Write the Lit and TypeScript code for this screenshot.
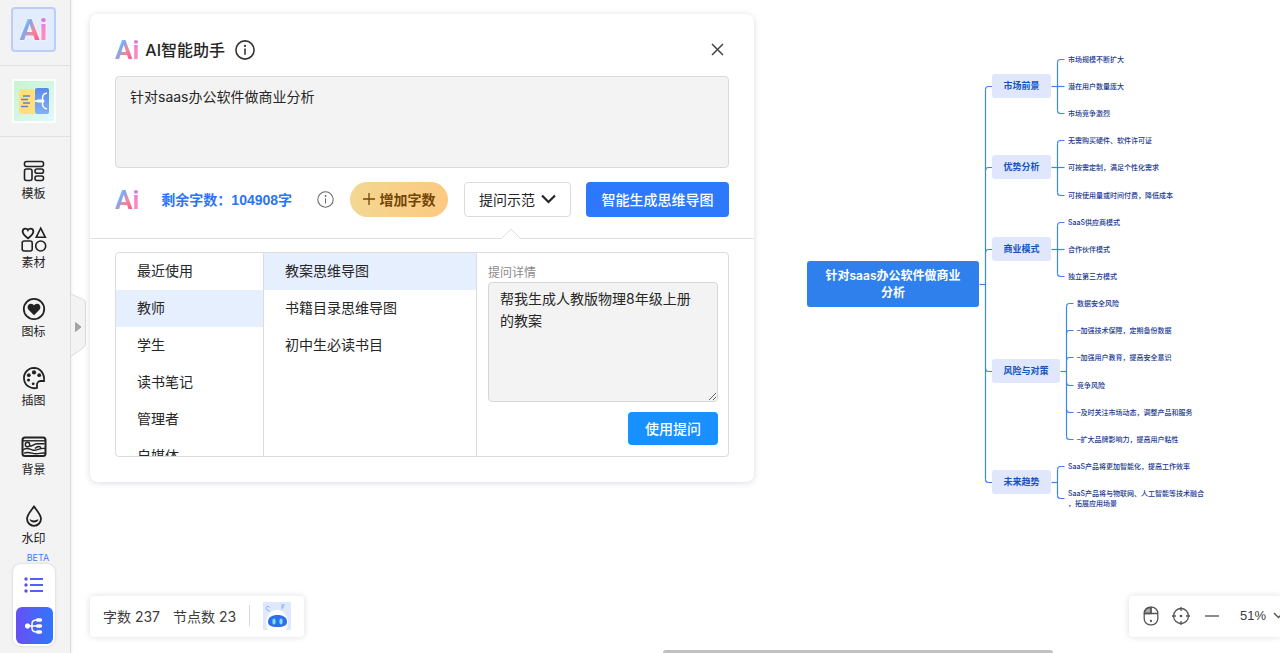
import { LitElement, html, svg, css } from "lit";
import { customElement, property, state } from "lit/decorators.js";
import { classMap } from "lit/directives/class-map.js";
import { styleMap } from "lit/directives/style-map.js";

const controls = css`
  * {
    box-sizing: border-box;
  }
  button {
    margin: 0;
    padding: 0;
    border: 0;
    background: none;
    color: inherit;
    font: inherit;
    cursor: pointer;
  }
  textarea {
    font: inherit;
    color: inherit;
    outline: none;
  }
  svg {
    display: block;
    flex: none;
  }
`;

@customElement("ai-mark")
export class AiMark extends LitElement {
  static styles = css`
    :host {
      display: flex;
      --mark-size: 26px;
    }
    .mark {
      font-family: Roboto, sans-serif;
      font-size: var(--mark-size);
      font-weight: 700;
      line-height: 30px;
      color: transparent;
      background-clip: text;
      -webkit-background-clip: text;
    }
    .a {
      background-image: linear-gradient(120deg, #8ff0f5 18%, #79a9f5 38%, #f08a9c 60%, #fb5f8d 85%);
    }
    .i {
      background-image: linear-gradient(180deg, #d478f0 15%, #f78acb 50%, #ff8fb6 85%);
    }
  `;
  render() {
    return html`<span class="mark a">A</span><span class="mark i">i</span>`;
  }
}

const icons: Record<string, unknown> = {
  template: svg`<rect x="1.500" y="1.500" width="19" height="5" rx="2"/><rect x="1.500" y="9" width="7.500" height="11.500" rx="2"/><rect x="12" y="9" width="8.500" height="4.200" rx="2"/><rect x="12" y="16" width="8.500" height="4.500" rx="2"/>`,
  material: svg`<path d="M5 9.2C2.4 7.3.4 5.7.4 3.3.4 1.7 1.5.7 2.8.7 3.8.7 4.6 1.2 5 2 5.500 1.200 6.300.7 7.200.7c1.400 0 2.500 1 2.500 2.600 0 2.400-2 4-4.700 5.900Z" transform="translate(-.8 -1.200) scale(1.150)"/><path d="M17.700-.8 22.300 8.300H13.200Z"/><rect x="-.8" y="12" width="10" height="10" rx="2"/><circle cx="17.700" cy="17" r="5"/>`,
  sticker: svg`<circle cx="11" cy="11" r="10.200" stroke-width="1.800"/><path fill="currentColor" stroke="none" d="M11 17.200 5.800 12.100C3.300 9.400 5 5.800 8 5.800c1.300 0 2.400.7 3 1.700.6-1 1.700-1.700 3-1.700 3 0 4.700 3.600 2.200 6.300Z"/>`,
  palette: svg`<path stroke-width="1.800" d="M11 .8A10.200 10.200 0 1 0 14 20.800V18A3.800 3.800 0 0 1 17.500 14H21C21.800 6.500 17 .8 11 .8Z"/><g fill="currentColor" stroke="none"><circle cx="5.800" cy="8.200" r="1.900"/><circle cx="11" cy="5.400" r="2.100"/><circle cx="16.200" cy="8.200" r="1.900"/><circle cx="5.500" cy="13" r="1.600"/><circle cx="10.200" cy="16.800" r="1.400"/></g>`,
  backdrop: svg`<rect x="-.5" y="1.500" width="23" height="18.500" rx="2.500" stroke-width="2"/><g stroke-width="1.400"><path d="M0 4.800h22"/><circle cx="4.500" cy="8.500" r="2.200"/><path d="M6.500 10.200c3 0 4.500-2.400 8-2.400h7M0 14c4-3.500 7-.5 10 .2 4 .8 7-2.700 12-1.700M12 12.500c3-2.500 5-2.500 6-.6M1 17.200c5-2.200 8 .6 12 .6 3.500 0 5-1.200 9-.8"/></g>`,
  watermark: svg`<path stroke-width="1.800" d="M11 1.500C8 5.700 4 9.800 4 13.800A7 7 0 0 0 18 13.800C18 9.800 14 5.700 11 1.500Z"/><path fill="currentColor" stroke="none" d="M6.500 14c2.500 1.800 5.500 1.800 9 .3-.5 2.200-2.200 3.200-4.500 3.200s-4-1.200-4.500-3.500Z"/>`,
};

@customElement("tool-rail")
export class ToolRail extends LitElement {
  static styles = [
    controls,
    css`
      :host {
        display: flex;
        flex-direction: column;
        align-items: stretch;
        width: 71px;
        flex: none;
        height: 100%;
        overflow: hidden;
        background: #f3f3f3;
        border-right: 1px solid #dcdcdc;
        box-shadow: 0 0 3px rgba(0, 0, 0, 0.12);
        color: #222;
      }
      .cell {
        display: flex;
        justify-content: center;
        flex: none;
        padding: 7px 3px 13px 0;
        border-bottom: 1px solid #e0e0e0;
      }
      .cell.second {
        padding: 12px 3px 13px 0;
      }
      .tile {
        display: flex;
        align-items: center;
        justify-content: center;
        width: 45px;
        height: 45px;
      }
      .tile.ai {
        background: #e3ecfd;
        border: 2px solid #bccdf8;
        border-radius: 4px;
      }
      .tile ai-mark {
        --mark-size: 30px;
        filter: drop-shadow(0 0 1px #fff);
      }
      .tools {
        display: flex;
        flex-direction: column;
        flex: none;
        padding: 23px 3px 0 0;
      }
      .tool {
        display: flex;
        flex-direction: column;
        align-items: center;
        height: 69px;
        gap: 3px;
        font-size: 12px;
        line-height: 18px;
      }
      .tool:last-child {
        height: 47px;
      }
      .tool svg {
        overflow: visible;
        fill: none;
        stroke: currentColor;
        stroke-width: 1.6;
      }
      .beta {
        padding-left: 6px;
        text-align: center;
        font-size: 9px;
        line-height: 12px;
        color: #3b7cf6;
      }
      .modes {
        display: flex;
        flex-direction: column;
        align-items: center;
        width: 42px;
        margin-left: 13px;
        padding: 2px;
        gap: 4px;
        background: #fff;
        border-radius: 8px;
        box-shadow: 0 0 3px rgba(0, 0, 0, 0.16);
      }
      .mode {
        display: flex;
        align-items: center;
        justify-content: center;
        width: 37px;
        height: 37px;
        border-radius: 6px;
      }
      .mode.on {
        background: linear-gradient(90deg, #6750f5, #3176fb);
      }
    `,
  ];

  private tools = [
    ["template", "模板"],
    ["material", "素材"],
    ["sticker", "图标"],
    ["palette", "插图"],
    ["backdrop", "背景"],
    ["watermark", "水印"],
  ];

  render() {
    return html`
      <div class="cell">
        <button class="tile ai" aria-label="AI"><ai-mark></ai-mark></button>
      </div>
      <div class="cell second">
        <button class="tile" aria-label="大纲与导图">
          <svg width="44" height="44" viewBox="0 0 44 44">
            <defs>
              <linearGradient id="mint" x2="1" y2="1"><stop stop-color="#c5f5d0" /><stop offset="1" stop-color="#e3f8fb" /></linearGradient>
              <linearGradient id="sky" x2="0" y2="1"><stop stop-color="#5b8bea" /><stop offset="1" stop-color="#80b1f8" /></linearGradient>
            </defs>
            <rect width="44" height="44" fill="#fbfffc" />
            <rect x="2" y="2" width="40" height="40" fill="url(#mint)" />
            <rect x="7" y="10" width="16" height="25" rx="2" fill="#ffe07a" />
            <rect x="23" y="9" width="14" height="26" rx="2" fill="url(#sky)" />
            <path d="M11 17h7M9 20.500h7M11 24h7M9 27.500h7" stroke="#5b82c4" stroke-width="1.400" />
            <path d="M23 22h7M35 14c-5 1-4.500 4-4.500 8s-.5 7 4.500 8" stroke="#fff" stroke-width="1.500" fill="none" />
            <path d="M26 22h5" stroke="#fff" stroke-width="3" stroke-linecap="round" />
          </svg>
        </button>
      </div>
      <nav class="tools">
        ${this.tools.map(
          ([icon, label]) => html`<button class="tool">
            <svg width="22" height="22" viewBox="0 0 22 22">${icons[icon]}</svg>
            <span>${label}</span>
          </button>`
        )}
      </nav>
      <div class="beta">BETA</div>
      <div class="modes">
        <button class="mode" aria-label="大纲">
          <svg width="20" height="16" viewBox="0 0 20 16">
            <g fill="#5a50ee"><circle cx="2" cy="2" r="1.700" /><circle cx="2" cy="8" r="1.700" /><circle cx="2" cy="14" r="1.700" /></g>
            <path d="M6 2h13M6 8h13M6 14h13" stroke="#4f62f5" stroke-width="2" />
          </svg>
        </button>
        <button class="mode on" aria-label="导图">
          <svg width="20" height="18" viewBox="0 0 20 18" stroke="#fff" fill="none">
            <path d="M4 9h9M16 3h-3Q8 3 8 6.500v5Q8 15 13 15h3" stroke-width="1.500" />
            <path d="M13.500 3h3M13.500 9h3M13.500 15h3" stroke-width="3.400" stroke-linecap="round" />
            <circle cx="3.500" cy="9" r="2.200" fill="#fff" />
          </svg>
        </button>
      </div>
    `;
  }
}

@customElement("assistant-panel")
export class AssistantPanel extends LitElement {
  static styles = [
    controls,
    css`
      :host {
        display: block;
        background: #fff;
        border-radius: 8px;
        box-shadow: 0 1px 6px rgba(40, 40, 90, 0.16);
        font-size: 14px;
        color: #262626;
      }
      .ask {
        padding: 24px 25px 21px;
        border-bottom: 1px solid #e2e2e2;
      }
      .head {
        display: flex;
        align-items: center;
        height: 24px;
        margin-bottom: 14px;
      }
      h2 {
        margin: 0 10px 0 6px;
        font-size: 16px;
        line-height: 24px;
        font-weight: 500;
      }
      .close {
        margin-left: auto;
        padding: 4px 5px 6px;
      }
      .prompt {
        display: block;
        width: 100%;
        height: 92px;
        padding: 9px 14px;
        line-height: 22px;
        background: #f3f3f3;
        border: 1px solid #dadada;
        border-radius: 4px;
        resize: none;
      }
      .row {
        display: flex;
        align-items: center;
        height: 35px;
        margin-top: 14px;
      }
      .left {
        margin: 0 25px 0 22px;
        font-family: "Liberation Sans", "Noto Sans CJK SC", sans-serif;
        font-weight: 600;
        line-height: 20px;
        color: #2b74f8;
      }
      .row button,
      .use {
        padding-bottom: 2px;
      }
      .more {
        display: flex;
        align-items: center;
        justify-content: center;
        gap: 5px;
        width: 98px;
        height: 35px;
        margin: 0 16px;
        border-radius: 18px;
        background: linear-gradient(90deg, #f3d792, #fcc981);
        color: #744408;
        font-weight: 600;
      }
      .demo {
        display: flex;
        align-items: center;
        justify-content: center;
        gap: 6px;
        width: 107px;
        height: 35px;
        border: 1px solid #dcdcdc;
        border-radius: 4px;
      }
      .make {
        width: 143px;
        height: 35px;
        margin-left: auto;
        border-radius: 4px;
        background: #2d79fd;
        color: #fff;
        font-weight: 500;
      }
      .samples {
        position: relative;
        padding: 13px 25px 25px;
      }
      .arrow {
        position: absolute;
        left: 411px;
        top: -11px;
      }
      .picker {
        display: grid;
        grid-template-columns: 148px 213px 1fr;
        height: 205px;
        border: 1px solid #dcdcdc;
        border-radius: 4px;
        overflow: hidden;
      }
      .list {
        margin: 0;
        padding: 0;
        list-style: none;
        overflow: hidden;
        border-right: 1px solid #dcdcdc;
      }
      .option {
        display: block;
        width: 100%;
        height: 37px;
        padding: 0 0 2px 21px;
        text-align: left;
        line-height: 35px;
      }
      .option.on {
        background: #e6effe;
      }
      .detail {
        display: flex;
        flex-direction: column;
        padding: 10px 10px 10px 11px;
      }
      label {
        font-size: 12px;
        line-height: 19px;
        color: #8a8a8a;
      }
      .text {
        display: block;
        width: 100%;
        height: 120px;
        padding: 5px 16px 5px 11px;
        line-height: 22px;
        background: #f3f3f3;
        border: 1px solid #d6d6d6;
        border-radius: 4px;
        resize: vertical;
      }
      .use {
        align-self: flex-end;
        width: 90px;
        height: 33px;
        margin-top: 10px;
        border-radius: 4px;
        background: #1890ff;
        color: #fff;
        font-weight: 500;
      }
    `,
  ];

  @state() private group = "教师";
  @state() private sample = "教案思维导图";

  private info(size: number, color: string, width: number) {
    return html`<svg width=${size} height=${size} viewBox="0 0 20 20" fill="none" stroke=${color} stroke-width=${width}>
      <circle cx="10" cy="10" r="9.100" />
      <path d="M10 8.500v6.200" />
      <circle cx="10" cy="5.900" r="1.100" fill=${color} stroke="none" />
    </svg>`;
  }

  private option(text: string, on: boolean, pick: () => void) {
    return html`<li><button class=${classMap({ option: true, on })} @click=${pick}>${text}</button></li>`;
  }

  render() {
    return html`
      <section class="ask">
        <div class="head">
          <ai-mark></ai-mark>
          <h2>AI智能助手</h2>
          ${this.info(20, "#333", 1.6)}
          <button class="close" aria-label="关闭">
            <svg width="13" height="13" viewBox="0 0 13 13" stroke="#444" stroke-width="1.500"><path d="m1 1 11 11M12 1 1 12" /></svg>
          </button>
        </div>
        <textarea class="prompt" aria-label="主题" .value=${"针对saas办公软件做商业分析"}></textarea>
        <div class="row">
          <ai-mark></ai-mark>
          <span class="left">剩余字数：104908字</span>
          ${this.info(17, "#666", 1.2)}
          <button class="more">
            <svg width="12" height="12" viewBox="0 0 12 12" stroke="currentColor" stroke-width="1.300"><path d="M0 6h12M6 0v12" /></svg>
            <span>增加字数</span>
          </button>
          <button class="demo" aria-expanded="true">
            <span>提问示范</span>
            <svg width="15" height="10" viewBox="0 0 15 10" fill="none" stroke="#262626" stroke-width="2.200"><path d="m1 1.500 6.500 6.500L14 1.500" /></svg>
          </button>
          <button class="make">智能生成思维导图</button>
        </div>
      </section>
      <section class="samples">
        <svg class="arrow" width="20" height="12" viewBox="0 0 20 12"><path d="M0 11 10 1 20 11" fill="#fff" stroke="#dedede" /><path d="M1 11.500h18" stroke="#fff" /></svg>
        <div class="picker">
          <ul class="list">
            ${["最近使用", "教师", "学生", "读书笔记", "管理者", "自媒体"].map((t) => this.option(t, t === this.group, () => (this.group = t)))}
          </ul>
          <ul class="list">
            ${["教案思维导图", "书籍目录思维导图", "初中生必读书目"].map((t) => this.option(t, t === this.sample, () => (this.sample = t)))}
          </ul>
          <div class="detail">
            <label for="detail">提问详情</label>
            <textarea id="detail" class="text" .value=${"帮我生成人教版物理8年级上册的教案"}></textarea>
            <button class="use">使用提问</button>
          </div>
        </div>
      </section>
    `;
  }
}

interface Branch {
  title: string;
  y: number;
  width: number;
  leaves: { y: number; text: string }[];
}

const BRANCHES: Branch[] = [
  { title: "市场前景", y: 86, width: 59, leaves: [
    { y: 59, text: "市场规模不断扩大" }, { y: 86, text: "潜在用户数量庞大" }, { y: 113, text: "市场竞争激烈" }] },
  { title: "优势分析", y: 167, width: 59, leaves: [
    { y: 140, text: "无需购买硬件、软件许可证" }, { y: 167, text: "可按需定制，满足个性化需求" }, { y: 195, text: "可按使用量或时间付费，降低成本" }] },
  { title: "商业模式", y: 249, width: 59, leaves: [
    { y: 222, text: "SaaS供应商模式" }, { y: 249, text: "合作伙伴模式" }, { y: 276, text: "独立第三方模式" }] },
  { title: "风险与对策", y: 371, width: 68, leaves: [
    { y: 303, text: "数据安全风险" }, { y: 330, text: "–加强技术保障，定期备份数据" }, { y: 357, text: "–加强用户教育，提高安全意识" },
    { y: 385, text: "竞争风险" }, { y: 412, text: "–及时关注市场动态，调整产品和服务" }, { y: 439, text: "–扩大品牌影响力，提高用户粘性" }] },
  { title: "未来趋势", y: 482, width: 59, leaves: [
    { y: 466, text: "SaaS产品将更加智能化，提高工作效率" }, { y: 498, text: "SaaS产品将与物联网、人工智能等技术融合\n，拓展应用场景" }] },
];

const ROOT_Y = 284;
const SPINE_X = 178;
const BRANCH_X = 185;

@customElement("mind-map")
export class MindMap extends LitElement {
  static styles = css`
    :host {
      display: block;
      width: 420px;
      height: 560px;
    }
    .links {
      position: absolute;
      inset: 0;
      fill: none;
      stroke: #3b86ec;
      stroke-width: 1.2;
    }
    .node {
      position: absolute;
      transform: translateY(-50%);
      box-sizing: border-box;
      text-align: center;
    }
    .root {
      width: 172px;
      padding: 6px 16px;
      border-radius: 3px;
      background: #2f80ed;
      color: #fff;
      font-size: 12px;
      line-height: 17px;
      font-weight: 600;
    }
    .branch {
      height: 24px;
      border-radius: 3px;
      background: #e0e7fd;
      color: #1455bd;
      font-size: 9px;
      line-height: 24px;
      font-weight: 700;
    }
    .leaf {
      padding-top: 2px;
      color: #20398f;
      font-size: 7px;
      line-height: 10px;
      font-weight: 500;
      text-align: left;
      white-space: pre;
    }
  `;

  /** Rounded elbow from a vertical spine to a child on its right. */
  private elbow(spine: number, from: number, to: number, end: number) {
    if (from === to) return svg`<path d="M${spine} ${to}H${end}"/>`;
    const s = to > from ? -3 : 3;
    return svg`<path d="M${spine} ${to + s}Q${spine} ${to} ${spine + 3} ${to}H${end}"/>`;
  }

  /** Vertical line that joins the outermost children of a spine. */
  private spine(x: number, ys: number[]) {
    return svg`<path d="M${x} ${Math.min(...ys) + 3}V${Math.max(...ys) - 3}"/>`;
  }

  render() {
    return html`
      <svg class="links" width="420" height="560" viewBox="-0.500 -0.500 420 560">
        <path d="M172 ${ROOT_Y}H${SPINE_X}" />
        ${this.spine(SPINE_X, BRANCHES.map((b) => b.y))}
        ${BRANCHES.map((b) => {
          const edge = BRANCH_X + b.width;
          const x = edge + 6;
          return svg`${this.elbow(SPINE_X, ROOT_Y, b.y, BRANCH_X)}
            <path d="M${edge} ${b.y}H${x}"/>
            ${this.spine(x, b.leaves.map((l) => l.y))}
            ${b.leaves.map((l) => this.elbow(x, b.y, l.y, x + 7))}`;
        })}
      </svg>
      <div class="node root" style=${styleMap({ left: "0px", top: `${ROOT_Y}px` })}>针对saas办公软件做商业分析</div>
      ${BRANCHES.map(
        (b) => html`
          <div class="node branch" style=${styleMap({ left: `${BRANCH_X}px`, top: `${b.y}px`, width: `${b.width}px` })}>${b.title}</div>
          ${b.leaves.map(
            (l) => html`<div class="node leaf" style=${styleMap({ left: `${BRANCH_X + b.width + 17}px`, top: `${l.y}px` })}>${l.text}</div>`
          )}
        `
      )}
    `;
  }
}

@customElement("app-root")
export class AppRoot extends LitElement {
  static styles = [
    controls,
    css`
      :host {
        display: flex;
        height: 100vh;
        overflow: hidden;
        background: #fff;
        font-family: Inter, "Noto Sans CJK SC", sans-serif;
      }
      .board {
        position: relative;
        flex: 1;
        min-width: 0;
        overflow: hidden;
      }
      .map {
        position: absolute;
        left: 736px;
        top: 0;
      }
      .panel {
        position: absolute;
        left: 19px;
        top: 14px;
        width: 664px;
      }
      .fold {
        position: absolute;
        left: -1px;
        top: 293px;
      }
      .bar {
        position: absolute;
        bottom: 16px;
        display: flex;
        align-items: center;
        height: 41px;
        padding-bottom: 2px;
        background: #fff;
        border-radius: 4px;
        box-shadow: 0 0 6px rgba(0, 0, 0, 0.14);
        color: #3d3d3d;
      }
      .stats {
        left: 19px;
        gap: 13px;
        padding-left: 13px;
        padding-right: 13px;
        font-size: 14px;
      }
      .rule {
        width: 1px;
        height: 21px;
        background: #d9d9d9;
      }
      .view {
        right: 0;
        width: 151px;
        padding-left: 13px;
        gap: 11px;
        overflow: hidden;
        border-radius: 4px 0 0 4px;
      }
      .zoom {
        display: flex;
        align-items: center;
        gap: 7px;
        padding-left: 7px;
        font: 500 13px/20px "Liberation Sans", sans-serif;
      }
      .scroll {
        position: absolute;
        left: 49%;
        bottom: 0;
        width: 390px;
        height: 3px;
        border-radius: 3px 3px 0 0;
        background: #c1c1c1;
      }
    `,
  ];

  @property({ type: Number }) words = 237;
  @property({ type: Number }) nodes = 23;

  render() {
    return html`
      <tool-rail></tool-rail>
      <main class="board">
        <mind-map class="map"></mind-map>
        <button class="fold" aria-label="展开">
          <svg width="17" height="66" viewBox="0 0 17 66">
            <path d="M0 .5 14 7Q15.500 8 15.500 10V50Q15.500 53 13 55L0 64Z" fill="#f3f3f3" stroke="#dcdcdc" />
            <path d="M5.500 29.500v9l5.500-4.500Z" fill="#a3a3a3" stroke="#a3a3a3" stroke-linejoin="round" />
          </svg>
        </button>
        <assistant-panel class="panel"></assistant-panel>
        <div class="bar stats">
          <span>字数 ${this.words}</span>
          <span>节点数 ${this.nodes}</span>
          <span class="rule"></span>
          <button aria-label="机器人助手">
            <svg width="28" height="28" viewBox="0 0 28 28">
              <rect width="28" height="28" fill="#dfe8fd" />
              <path d="M5 28a9.500 12 0 0 1-2-8C4 12 9 8 14 8s10 4 11 12a9 12 0 0 1-2 8Z" fill="#fff" />
              <path d="M5 20c0-5 4-7 9.500-7S24 15 24 20c0 3.500-3 5-9.500 5S5 23.500 5 20Z" fill="#2f6fee" />
              <ellipse cx="11" cy="19.500" rx="1.600" ry="3" fill="#7be3ff" /><ellipse cx="18" cy="19.500" rx="1.600" ry="3" fill="#7be3ff" />
              <path d="M5 8a1.800 1.800 0 1 1 1.500-2.500M5 8l2 1.500M19 2.500v5M19 3h3M19 5h2" stroke="#88aef0" fill="none" />
            </svg>
          </button>
        </div>
        <div class="bar view">
          <button aria-label="鼠标模式">
            <svg width="18" height="20" viewBox="0 0 18 20" fill="none" stroke="#555" stroke-width="1.300">
              <path d="M2.500 7.500V7Q2.500 1.500 9 1.500V7.500Z" fill="#aaa" />
              <rect x="2.200" y="1.200" width="13.600" height="17.600" rx="6" /><path d="M2 7.500h14M9 1v6.500" /><circle cx="9" cy="15" r=".5" />
            </svg>
          </button>
          <button aria-label="居中">
            <svg width="20" height="20" viewBox="0 0 20 20" fill="none" stroke="#555" stroke-width="1.300">
              <circle cx="10" cy="10" r="7.500" /><path d="M10 1v4M10 15v4M1 10h4M15 10h4" /><circle cx="10" cy="10" r=".7" fill="#555" />
            </svg>
          </button>
          <button aria-label="缩小">
            <svg width="20" height="20" viewBox="0 0 20 20" stroke="#666" stroke-width="1.400"><path d="M3 10h14" /></svg>
          </button>
          <button class="zoom" aria-label="缩放比例">
            <span>51%</span>
            <svg width="11" height="7" viewBox="0 0 11 7" fill="none" stroke="#555" stroke-width="1.400"><path d="m1 1 4.500 4.500L10 1" /></svg>
          </button>
        </div>
        <div class="scroll"></div>
      </main>
    `;
  }
}
